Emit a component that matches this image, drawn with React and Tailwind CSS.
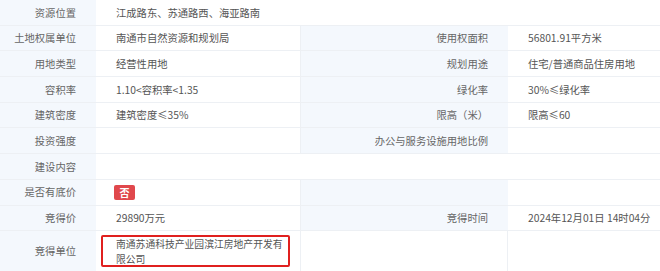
const rows = [
  { label: '资源位置', value: '江成路东、苏通路西、海亚路南', span: true },
  { label: '土地权属单位', value: '南通市自然资源和规划局', label2: '使用权面积', value2: '56801.91平方米' },
  { label: '用地类型', value: '经营性用地', label2: '规划用途', value2: '住宅/普通商品住房用地' },
  { label: '容积率', value: '1.10<容积率<1.35', label2: '绿化率', value2: '30%≤绿化率' },
  { label: '建筑密度', value: '建筑密度≤35%', label2: '限高（米）', value2: '限高≤60' },
  { label: '投资强度', value: '', label2: '办公与服务设施用地比例', value2: '' },
  { label: '建设内容', value: '', span: true },
  { label: '是否有底价', badge: '否', label2: '', value2: '' },
  { label: '竞得价', value: '29890万元', label2: '竞得时间', value2: '2024年12月01日 14时04分' },
];

const labelCls =
  'flex items-center justify-end pr-[20px] bg-[#f4f8fd] border-b border-[#edf0f4] text-[#666] whitespace-nowrap';
const valueCls =
  'flex items-center pl-[20px] bg-white border-b border-[#edf0f4] text-[#555] whitespace-nowrap';

export default function App() {
  return (
    <div
      className="w-[660px] h-[271px] overflow-hidden bg-white text-[10.3px]"
      style={{ fontFamily: '"Noto Sans CJK SC", "Noto Sans", sans-serif' }}
    >
      <div className="grid grid-cols-[96px_205px_207px_152px] auto-rows-[25.7px]">
        {rows.map((r) => (
          <Row key={r.label} r={r} />
        ))}
        <div className={labelCls + ' h-[40px] border-b-0'}>竞得单位</div>
        <div className="h-[40px] pl-[5px] pt-[4px] border-r border-[#edf0f4]">
          <div className="w-[189px] h-[32px] border-2 border-[#e0201f] rounded-[2px] pl-[13px] text-[9.8px] text-[#555] leading-[14.5px] whitespace-nowrap">
            南通苏通科技产业园滨江房地产开发有
            <br />
            限公司
          </div>
        </div>
        <div className="h-[40px] border-r border-[#edf0f4] bg-white"></div>
        <div className="h-[40px] bg-white"></div>
      </div>
    </div>
  );
}

function Row({ r }) {
  if (r.span) {
    return (
      <>
        <div className={labelCls}>{r.label}</div>
        <div className={valueCls + ' col-span-3'}>{r.value}</div>
      </>
    );
  }
  return (
    <>
      <div className={labelCls}>{r.label}</div>
      <div className={valueCls + ' border-r'}>
        {r.badge ? (
          <span className="ml-[-2px] inline-flex items-center justify-center w-[21px] h-[15px] rounded-[2px] bg-[#e0484c] text-white font-bold text-[10px]">
            {r.badge}
          </span>
        ) : (
          r.value
        )}
      </div>
      <div className={labelCls}>{r.label2}</div>
      <div className={valueCls + ' pl-[19px]'}>{r.value2}</div>
    </>
  );
}
